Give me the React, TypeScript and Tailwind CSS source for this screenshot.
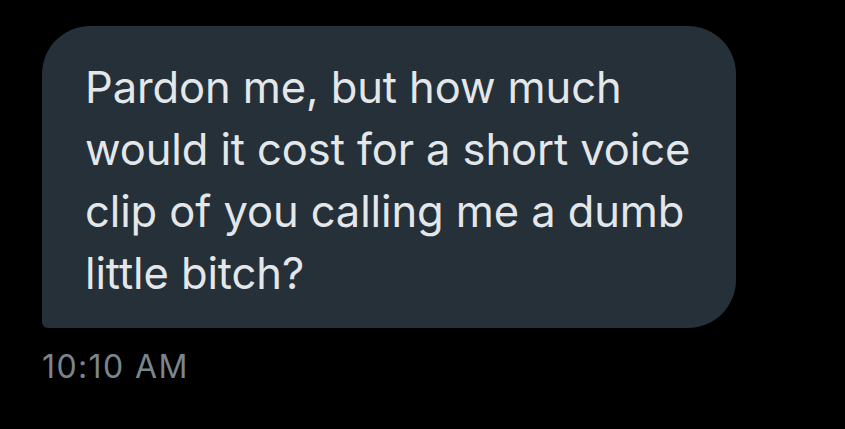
export default function App() {
  return (
    <div className="w-[845px] h-[429px] bg-black overflow-hidden" style={{ fontFamily: "Inter, 'Open Sans', sans-serif" }}>
      <div className="pt-[26px] pl-[42px]">
        <div className="w-[694px] h-[302px] bg-[#253039] rounded-[48px] rounded-bl-[6px] pl-[43px] pt-[30px]">
          <p className="text-[#e3e7ea] text-[43.5px] leading-[62px] tracking-[-0.1px]">
            Pardon me, but how much<br />
            would it cost for a short voice<br />
            clip of you calling me a dumb<br />
            little bitch?
          </p>
        </div>
        <div className="mt-[19px] text-[#7b858e] text-[32px] leading-[40px] tracking-[1.4px]">10:10 AM</div>
      </div>
    </div>
  );
}
